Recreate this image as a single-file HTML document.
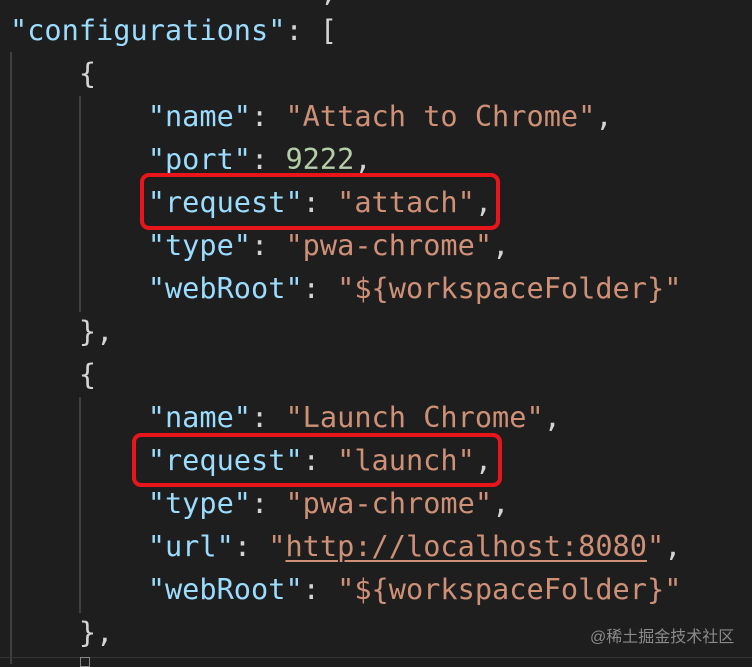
<!DOCTYPE html>
<html><head><meta charset="utf-8"><style>
html,body{margin:0;padding:0;}
body{width:752px;height:664px;background:#1e1e1e;position:relative;overflow:hidden;font-family:"DejaVu Sans Mono","Liberation Mono",monospace;font-size:28.6px;}
.l{position:absolute;left:10px;height:43px;line-height:43px;white-space:pre;color:#d4d4d4;}
.k{color:#9cdcfe}.s{color:#ce9178}.n{color:#b5cea8}
.g{position:absolute;width:2px;background:#404040;}
.box{position:absolute;border:4.5px solid #e8161b;border-radius:9px;box-sizing:border-box;}
.u{text-decoration:underline;text-underline-offset:4px;text-decoration-thickness:2px;}
</style></head><body>
<div class="g" style="left:10px;top:52px;height:612px"></div>
<div class="g" style="left:79px;top:96px;height:216px"></div>
<div class="g" style="left:79px;top:397px;height:216px"></div>
<div style="position:absolute;left:0;top:657px;width:752px;height:1px;background:#333"></div>
<div style="position:absolute;left:80px;top:657px;width:10px;height:10px;border:1px solid #888;box-sizing:border-box"></div>
<div class="l" style="top:-30px;left:320px">,</div>
<div class="l" style="top:9px"><span class="k">"configurations"</span>: [</div>
<div class="l" style="top:52px">    {</div>
<div class="l" style="top:95px">        <span class="k">"name"</span>: <span class="s">"Attach to Chrome"</span>,</div>
<div class="l" style="top:138px">        <span class="k">"port"</span>: <span class="n">9222</span>,</div>
<div class="l" style="top:181px">        <span class="k">"request"</span>: <span class="s">"attach"</span>,</div>
<div class="l" style="top:224px">        <span class="k">"type"</span>: <span class="s">"pwa-chrome"</span>,</div>
<div class="l" style="top:267px">        <span class="k">"webRoot"</span>: <span class="s">"${workspaceFolder}"</span></div>
<div class="l" style="top:310px">    },</div>
<div class="l" style="top:353px">    {</div>
<div class="l" style="top:396px">        <span class="k">"name"</span>: <span class="s">"Launch Chrome"</span>,</div>
<div class="l" style="top:439px">        <span class="k">"request"</span>: <span class="s">"launch"</span>,</div>
<div class="l" style="top:482px">        <span class="k">"type"</span>: <span class="s">"pwa-chrome"</span>,</div>
<div class="l" style="top:525px">        <span class="k">"url"</span>: <span class="s">"<span class="u">http://localhost:8080</span>"</span>,</div>
<div class="l" style="top:568px">        <span class="k">"webRoot"</span>: <span class="s">"${workspaceFolder}"</span></div>
<div class="l" style="top:611px">    },</div>
<div class="box" style="left:140px;top:173px;width:360px;height:57px"></div>
<div class="box" style="left:132px;top:433px;width:370px;height:54px"></div>
<div style="position:absolute;left:590px;top:623px;font-family:'Liberation Sans','Noto Sans CJK SC',sans-serif;font-size:16px;color:#8a8a8a">@稀土掘金技术社区</div>
</body></html>
